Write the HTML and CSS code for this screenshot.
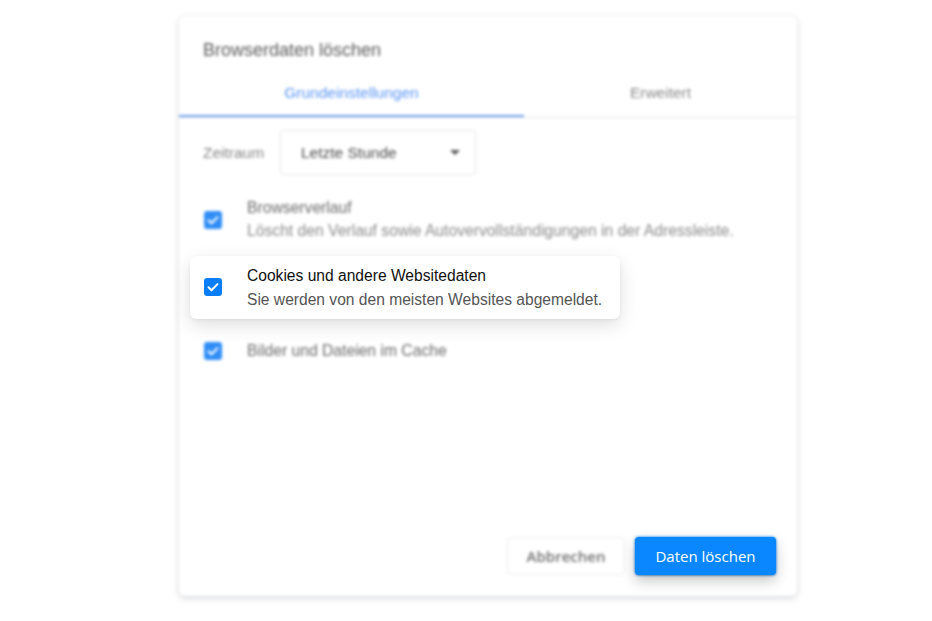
FILE: index.html
```html
<!DOCTYPE html>
<html lang="de">
<head>
<meta charset="utf-8">
<title>Browserdaten löschen</title>
<link rel="stylesheet" href="styles.css">
</head>
<body>
<div class="stage">
  <div class="dialog">
    <div class="title">Browserdaten löschen</div>
    <div class="tabs">
      <div class="tab active">Grundeinstellungen</div>
      <div class="tab">Erweitert</div>
    </div>
    <div class="range">
      <span class="range-label">Zeitraum</span>
      <div class="select">
        <span>Letzte Stunde</span>
        <span class="caret"></span>
      </div>
    </div>
    <div class="options">
      <div class="opt opt-1">
        <span class="cb"><svg viewBox="0 0 18 18"><path d="M4.5 9.3l3 3 6-6.2" fill="none" stroke="#fff" stroke-width="2" stroke-linecap="round" stroke-linejoin="round"/></svg></span>
        <div class="opt-text">
          <div class="opt-title">Browserverlauf</div>
          <div class="opt-desc">Löscht den Verlauf sowie Autovervollständigungen in der Adressleiste.</div>
        </div>
      </div>
      <div class="opt opt-2">
        <span class="cb"><svg viewBox="0 0 18 18"><path d="M4.5 9.3l3 3 6-6.2" fill="none" stroke="#fff" stroke-width="2" stroke-linecap="round" stroke-linejoin="round"/></svg></span>
        <div class="opt-text">
          <div class="opt-title">Cookies und andere Websitedaten</div>
          <div class="opt-desc">Sie werden von den meisten Websites abgemeldet.</div>
        </div>
      </div>
      <div class="opt opt-3">
        <span class="cb"><svg viewBox="0 0 18 18"><path d="M4.5 9.3l3 3 6-6.2" fill="none" stroke="#fff" stroke-width="2" stroke-linecap="round" stroke-linejoin="round"/></svg></span>
        <div class="opt-text">
          <div class="opt-title">Bilder und Dateien im Cache</div>
        </div>
      </div>
    </div>
    <div class="footer">
      <button class="btn btn-cancel">Abbrechen</button>
      <button class="btn btn-primary">Daten löschen</button>
    </div>
  </div>

  <div class="focus-card">
    <span class="cb"><svg viewBox="0 0 18 18"><path d="M4.5 9.3l3 3 6-6.2" fill="none" stroke="#fff" stroke-width="2" stroke-linecap="round" stroke-linejoin="round"/></svg></span>
    <div class="opt-text">
      <div class="focus-title">Cookies und andere Websitedaten</div>
      <div class="focus-desc">Sie werden von den meisten Websites abgemeldet.</div>
    </div>
  </div>

  <button class="btn btn-primary focus-btn">Daten löschen</button>
</div>
</body>
</html>
```

FILE: styles.css
```css
html, body {
  margin: 0;
  padding: 0;
  background: #ffffff;
}

body {
  font-family: "Liberation Sans", Arial, sans-serif;
  width: 932px;
  height: 621px;
  overflow: hidden;
}

.stage {
  position: relative;
  width: 932px;
  height: 621px;
  box-sizing: border-box;
  padding: 16px 0 0 179px;
}

.dialog {
  width: 618px;
  height: 580px;
  box-sizing: border-box;
  background: #fff;
  border-radius: 6px;
  box-shadow: 0 2px 6px rgba(60, 64, 80, 0.22);
  display: flex;
  flex-direction: column;
  filter: blur(1.4px);
}

.title {
  padding: 24px 24px 0;
  font-size: 18px;
  line-height: 20px;
  color: #5a5a5a;
}

.tabs {
  display: flex;
  margin-top: 10px;
  border-bottom: 1px solid #e6e6e6;
}

.tab {
  height: 45px;
  line-height: 45px;
  text-align: center;
  font-size: 15.5px;
  color: #8a8a8a;
  border-bottom: 2px solid transparent;
}

.tab.active {
  width: 345px;
  color: #5b95f0;
  border-bottom-color: #6a9ff2;
}

.tab + .tab {
  flex: 1;
}

.range {
  display: flex;
  align-items: center;
  padding-left: 24px;
  margin-top: 12px;
}

.range-label {
  font-size: 15.5px;
  color: #858585;
  width: 77px;
}

.select {
  width: 196px;
  height: 45px;
  box-sizing: border-box;
  border: 1px solid #e6e6e6;
  border-radius: 4px;
  display: flex;
  align-items: center;
  justify-content: space-between;
  padding: 0 15px 0 20px;
  font-size: 15.5px;
  color: #4a4a4a;
}

.caret {
  width: 0;
  height: 0;
  border-left: 5px solid transparent;
  border-right: 5px solid transparent;
  border-top: 5px solid #555;
}

.options {
  display: flex;
  flex-direction: column;
  padding-left: 25px;
}

.opt {
  display: flex;
  align-items: center;
  gap: 25px;
}

.opt-1 { margin-top: 21px; }
.opt-2 { margin-top: 24px; visibility: hidden; }
.opt-3 { margin-top: 25px; }

.cb {
  width: 18px;
  height: 18px;
  border-radius: 3px;
  background: #2f8df5;
  flex: none;
  display: flex;
}

.cb svg {
  width: 18px;
  height: 18px;
}

.opt-title {
  font-size: 15.7px;
  line-height: 23px;
  color: #6a6a6a;
}

.opt-desc {
  font-size: 15.7px;
  line-height: 24px;
  color: #8a8a8a;
}

.footer {
  margin-top: auto;
  display: flex;
  justify-content: flex-end;
  gap: 10px;
  padding: 0 21px 21px 0;
}

.btn {
  height: 38px;
  border-radius: 4px;
  font-family: "Open Sans", "Noto Sans", sans-serif;
  font-size: 15px;
  font-weight: 500;
  padding: 0;
  cursor: pointer;
}

.btn-cancel {
  width: 118px;
  background: #fff;
  border: 1px solid #ececec;
  color: #707070;
  font-weight: 600;
}

.btn-primary {
  width: 141px;
  background: #0a87fe;
  border: none;
  color: #fff;
}

.focus-card {
  position: absolute;
  left: 190px;
  top: 256px;
  width: 430px;
  height: 63px;
  box-sizing: border-box;
  padding: 9px 0 0 14px;
  background: #fff;
  border-radius: 6px;
  box-shadow: 0 6px 18px rgba(0, 0, 0, 0.13), 0 1px 3px rgba(0, 0, 0, 0.06);
  display: flex;
  align-items: flex-start;
  gap: 25px;
}

.focus-card .cb {
  background: #0a7ef8;
  margin-top: 13px;
}

.focus-title {
  font-size: 15.6px;
  line-height: 22px;
  color: #111;
}

.focus-desc {
  margin-top: 2px;
  font-size: 15.6px;
  line-height: 22px;
  color: #555;
}

.focus-btn {
  position: absolute;
  left: 635px;
  top: 537px;
  box-shadow: 0 6px 14px rgba(0, 0, 0, 0.22), 0 1px 2px rgba(0, 0, 0, 0.15);
}
```
